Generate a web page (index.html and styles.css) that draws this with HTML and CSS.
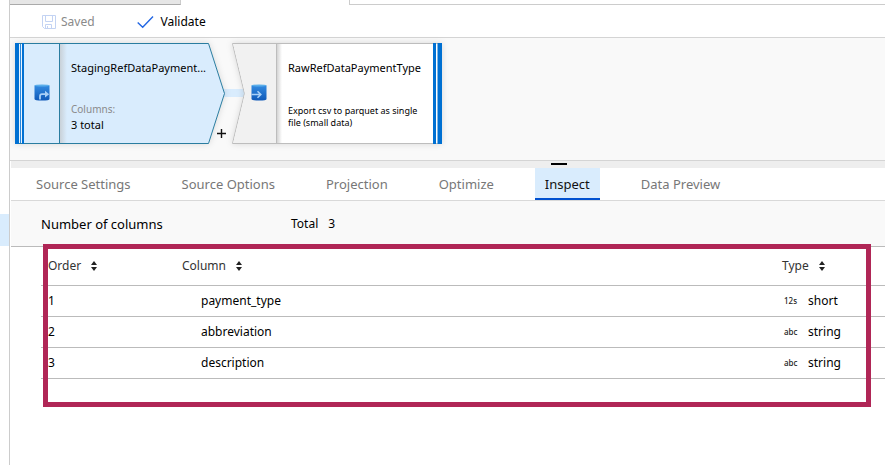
FILE: index.html
```html
<!DOCTYPE html>
<html lang="en">
<head>
<meta charset="utf-8">
<title>Data flow</title>
<link rel="stylesheet" href="styles.css">
</head>
<body>
<div class="app">
  <aside class="rail"><div class="rail-selected"></div></aside>
  <main class="main">
    <div class="doc-tabs">
      <div class="doc-tab doc-tab-idle"></div>
      <div class="doc-tab doc-tab-active"></div>
      <div class="doc-tab-rest"></div>
    </div>
    <div class="toolbar">
      <button class="tool tool-saved" type="button" disabled>
        <svg width="14" height="14" viewBox="0 0 14 14" fill="none" stroke="#c3d3f3"><path d="M.5.5h13v13h-11l-2-2zM3.500.5v6h7v-6M3.500 13.500v-4h6v4M5.500 11v2.500"/></svg>
        Saved
      </button>
      <button class="tool" type="button">
        <svg width="17" height="14" viewBox="0 0 17 14" fill="none" stroke="#2266e3" stroke-width="1.400"><path d="M.7 7.500l5 4.800L16 1.500"/></svg>
        Validate
      </button>
    </div>
    <section class="canvas">
      <div class="link"></div>
      <article class="node source">
        <svg class="shape" width="212" height="102" viewBox="0 0 212 102">
          <defs><linearGradient id="fold1"><stop offset="0" stop-color="#c9d1d8"/><stop offset="1" stop-color="#d9ecfd"/></linearGradient></defs>
          <path d="M.5.500H193.500L209.500 50.500L193.500 100.500H.5z" fill="#d9ecfd" stroke="#2a7da0"/>
          <path d="M45 1h7v99h-7z" fill="url(#fold1)"/>
          <path d="M44.500 0v101" stroke="#2a7da0"/>
          <path d="M0 0h4v101H0zM5 1h.8v99H5zM7 0h2v101H7z" fill="#0070d2"/><path d="M4 1h1v99H4zM6 1h1v99H6z" fill="#e8f4ff"/>
        </svg>
        <svg class="node-icon" width="16" height="18" viewBox="0 0 16 18">
          <defs><linearGradient id="cyl" x2="0" y2="1"><stop offset="0" stop-color="#328ae0"/><stop offset="1" stop-color="#1059b8"/></linearGradient></defs>
          <path d="M.5 1.500v13.500q0 1.500 7.500 1.500t7.500-1.500V1.500z" fill="url(#cyl)"/><ellipse cx="8" cy="1.500" rx="7.500" ry="1" fill="#5aaeea"/>
          <path d="M6 15.500v-3.300q0-2 2-2h4" fill="none" stroke="#a9d0f7" stroke-width="1.800"/><path d="M11 6.800l4.200 3.400-4.200 3.400z" fill="#a9d0f7"/>
        </svg>
        <h2 class="node-title">StagingRefDataPayment...</h2>
        <p class="node-label">Columns:</p>
        <p class="node-value">3 total</p>
      </article>
      <button class="add" type="button" aria-label="Add step"><svg width="9" height="9" viewBox="0 0 9 9" stroke="#111" stroke-width="1.400"><path d="M4.500 0v9M0 4.500h9"/></svg></button>
      <article class="node sink">
        <svg class="shape" width="212" height="102" viewBox="0 0 212 102">
          <defs><linearGradient id="fold2"><stop offset="0" stop-color="#d4d4d4"/><stop offset="1" stop-color="#fff"/></linearGradient></defs>
          <path d="M.5.500H209.500V100.500H.5L12.500 50.500z" fill="#fff" stroke="#bdbdbd"/>
          <path d="M1.200 1H44v99H1.200L13 50.500z" fill="#f1f1f1"/>
          <path d="M45 1h5v99h-5z" fill="url(#fold2)"/><path d="M44.500 0v101" stroke="#bdbdbd"/>
          <path d="M201 0h3v101h-3zM205.500 0h4.500v101h-4.500z" fill="#0070d2"/>
        </svg>
        <svg class="node-icon" width="16" height="18" viewBox="0 0 16 18">
          <path d="M.5 1.500v13.500q0 1.500 7.500 1.500t7.500-1.500V1.500z" fill="url(#cyl)"/><ellipse cx="8" cy="1.500" rx="7.500" ry="1" fill="#5aaeea"/>
          <path d="M.5 10.500h8.500M6.500 7.300l3.300 3.200-3.300 3.200" fill="none" stroke="#a9d0f7" stroke-width="1.600"/>
        </svg>
        <h2 class="node-title">RawRefDataPaymentType</h2>
        <p class="node-note">Export csv to parquet as single file (small data)</p>
      </article>
    </section>
    <div class="splitter"><div class="grip"></div></div>
    <nav class="tabs">
      <a class="tab" href="#">Source Settings</a>
      <a class="tab" href="#">Source Options</a>
      <a class="tab" href="#">Projection</a>
      <a class="tab" href="#">Optimize</a>
      <a class="tab tab-active" href="#" aria-current="page">Inspect</a>
      <a class="tab" href="#">Data Preview</a>
    </nav>
    <div class="summary">
      <span class="summary-name">Number of columns</span>
      <span class="summary-total">Total</span>
      <span class="summary-total">3</span>
    </div>
    <section class="results">
      <table class="grid">
        <thead>
          <tr>
            <th class="col-order" scope="col"><button class="sort" type="button">Order <svg width="6" height="10" viewBox="0 0 6 10"><path d="M3 0l3 4H0zM3 10l3-4H0z" fill="#222"/></svg></button></th>
            <th scope="col"><button class="sort" type="button">Column <svg width="6" height="10" viewBox="0 0 6 10"><path d="M3 0l3 4H0zM3 10l3-4H0z" fill="#222"/></svg></button></th>
            <th class="col-type" scope="col"><button class="sort" type="button">Type <svg width="6" height="10" viewBox="0 0 6 10"><path d="M3 0l3 4H0zM3 10l3-4H0z" fill="#222"/></svg></button></th>
          </tr>
        </thead>
        <tbody>
          <tr><td>1</td><td class="name">payment_type</td><td><span class="kind">12s</span>short</td></tr>
          <tr><td>2</td><td class="name">abbreviation</td><td><span class="kind">abc</span>string</td></tr>
          <tr><td>3</td><td class="name">description</td><td><span class="kind">abc</span>string</td></tr>
        </tbody>
      </table>
      <div class="highlight"></div>
    </section>
  </main>
</div>
</body>
</html>
```
FILE: styles.css
```css
* { box-sizing: border-box; }
body { margin: 0; background: #fff; color: #000; font: 13px/18px "Noto Sans", "Open Sans", sans-serif; }
button { border: 0; padding: 0; background: none; font: inherit; color: inherit; }
h2, p { margin: 0; font-weight: 400; }
.app { display: flex; min-height: 100vh; }
.rail { flex: 0 0 10px; border-right: 1px solid #ccc; padding-top: 214px; }
.rail-selected { height: 32px; background: #d9ecfd; }
.main { flex: 1; min-width: 0; }

.doc-tabs { display: flex; height: 5px; }
.doc-tab { width: 168px; }
.doc-tab-idle { width: 171px; background: #e6e6e6; border-bottom: 1px solid #aaa; border-right: 1px solid #ccc; }
.doc-tab-rest { flex: 1; border: solid #ccc; border-width: 0 0 1px 1px; }

.toolbar { display: flex; gap: 42px; height: 33px; padding: 2px 32px 0; border-bottom: 1px solid #d4d4d4; }
.tool { display: flex; align-items: center; gap: 7px; font-size: 12px; }
.tool-saved { gap: 5px; color: #8a8a8a; }

.canvas { position: relative; height: 123px; background: #f9f9f9; border-bottom: 1px solid #d4d4d4; }
.link { position: absolute; left: 213px; top: 51px; width: 22px; height: 8px; background: #d9ecfd; }
.node { position: absolute; top: 5px; width: 212px; height: 102px; }
.source { left: 5px; padding: 16px 0 0 56px; }
.sink { left: 222px; padding: 16px 16px 0 56px; }
.shape { position: absolute; left: 0; top: 0; filter: drop-shadow(0 0 3px #0002); }
.node-icon { position: absolute; left: 19px; top: 41px; }
.node-title, .node-label, .node-value, .node-note { position: relative; }
.node-title { font-size: 11px; white-space: nowrap; }
.node-label { margin-top: 25px; font-size: 10px; line-height: 15px; color: #8a8a8a; }
.node-value { font-size: 11px; line-height: 15px; }
.node-note { margin-top: 28px; font-size: 9px; line-height: 12px; }
.add { position: absolute; left: 207px; top: 91px; width: 9px; height: 9px; display: flex; }

.splitter { display: flex; justify-content: center; height: 7px; margin-left: 1px; padding: 2px 0 0 222px; background: #eee; }
.grip { width: 16px; height: 2px; background: #000; }

.tabs { display: flex; gap: 31px; height: 33px; margin-left: 1px; padding-left: 15px; border-bottom: 1px solid #d9d9d9; }
.tab { padding: 7px 10px; color: #777; text-decoration: none; white-space: nowrap; }
.tab-active { background: #d9ecfd; border-bottom: 2px solid #0050d0; color: #111; }

.summary { display: flex; align-items: center; height: 46px; margin-left: 1px; padding-left: 30px; background: #f9f9f9; border-bottom: 1px solid #bbb; }
.summary-name { width: 250px; }
.summary-total { margin-right: 10px; font-size: 12px; }

.results { position: relative; padding-left: 31px; }
.grid { width: 100%; border-collapse: separate; border-spacing: 0; table-layout: fixed; }
.grid th, .grid td { height: 31px; padding: 0 7px; border-bottom: 1px solid #bbb; text-align: left; font-size: 12px; font-weight: 400; }
.grid th { height: 39px; }
.col-order { width: 134px; }
.col-type { width: 110px; }
.sort { display: flex; align-items: center; gap: 10px; color: #333; }
.grid .name { padding-left: 26px; }
.kind { display: inline-block; width: 26px; padding-left: 2px; font-size: 8px; font-weight: 500; vertical-align: 1px; color: #222; }
.highlight { position: absolute; left: 33px; right: 14px; top: -3px; height: 163px; border: 5px solid #b02656; pointer-events: none; }
```
